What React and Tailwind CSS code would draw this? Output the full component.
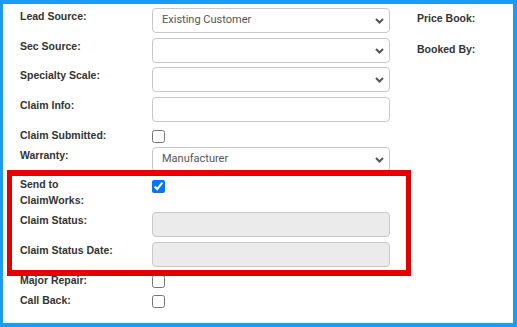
import React from "react";

function Chevron() {
  return (
    <svg width="9" height="6" viewBox="0 0 9 6" className="shrink-0">
      <path d="M1 1 L4.5 4.5 L8 1" fill="none" stroke="#555" strokeWidth="2" />
    </svg>
  );
}

function Select({ value }) {
  return (
    <div className="h-[25px] w-[238px] border border-[#c8c8c8] rounded-[4px] pl-[9px] pr-[5px] flex items-center justify-between bg-white font-['Roboto',sans-serif] text-[11px] text-[#555]">
      <span>{value}</span>
      <Chevron />
    </div>
  );
}

function Input({ disabled }) {
  return (
    <div
      className={
        "h-[25px] w-[238px] border border-[#c8c8c8] rounded-[4px] " +
        (disabled ? "bg-[#ebebeb]" : "bg-white")
      }
    />
  );
}

function Check({ checked, top = "mt-[3px]" }) {
  return (
    <input
      type="checkbox"
      defaultChecked={checked}
      className={"m-0 w-[13px] h-[13px] " + top}
    />
  );
}

function Row({ label, h, children }) {
  return (
    <div className={"flex items-start " + h}>
      <div className="w-[132px] pr-[30px] text-[10.5px] leading-[16px] font-bold text-[#333]">
        {label}
      </div>
      {children}
    </div>
  );
}

export default function App() {
  return (
    <div className="relative w-[517px] h-[327px] bg-white border-[#1a9cf0] border-l-[3px] border-t-[4px] border-r-[4px] border-b-[4px] font-['Liberation_Sans',Arial,sans-serif]">
      <div className="flex pt-[4px] pl-[17px]">
        <div className="flex flex-col w-[370px]">
          <Row label="Lead Source:" h="h-[30px]">
            <Select value="Existing Customer" />
          </Row>
          <Row label="Sec Source:" h="h-[29px]">
            <Select value="" />
          </Row>
          <Row label="Specialty Scale:" h="h-[30px]">
            <Select value="" />
          </Row>
          <Row label="Claim Info:" h="h-[30px]">
            <Input />
          </Row>
          <Row label="Claim Submitted:" h="h-[20px]">
            <Check />
          </Row>
          <Row label="Warranty:" h="h-[29px]">
            <Select value="Manufacturer" />
          </Row>
          <Row label="Send to ClaimWorks:" h="h-[36px]">
            <Check checked top="mt-[4px]" />
          </Row>
          <Row label="Claim Status:" h="h-[30px]">
            <Input disabled />
          </Row>
          <Row label="Claim Status Date:" h="h-[30px]">
            <Input disabled />
          </Row>
          <Row label="Major Repair:" h="h-[20px]">
            <Check />
          </Row>
          <Row label="Call Back:" h="h-[20px]">
            <Check />
          </Row>
        </div>
        <div className="ml-[27px] flex flex-col pt-[2px] text-[10.5px] leading-[16px] font-bold text-[#333]">
          <div className="h-[31px]">Price Book:</div>
          <div className="h-[31px]">Booked By:</div>
        </div>
      </div>
      <div className="absolute left-[4px] top-[166px] w-[404px] h-[106px] border-x-[5px] border-y-[6px] border-[#e50000]" />
    </div>
  );
}
